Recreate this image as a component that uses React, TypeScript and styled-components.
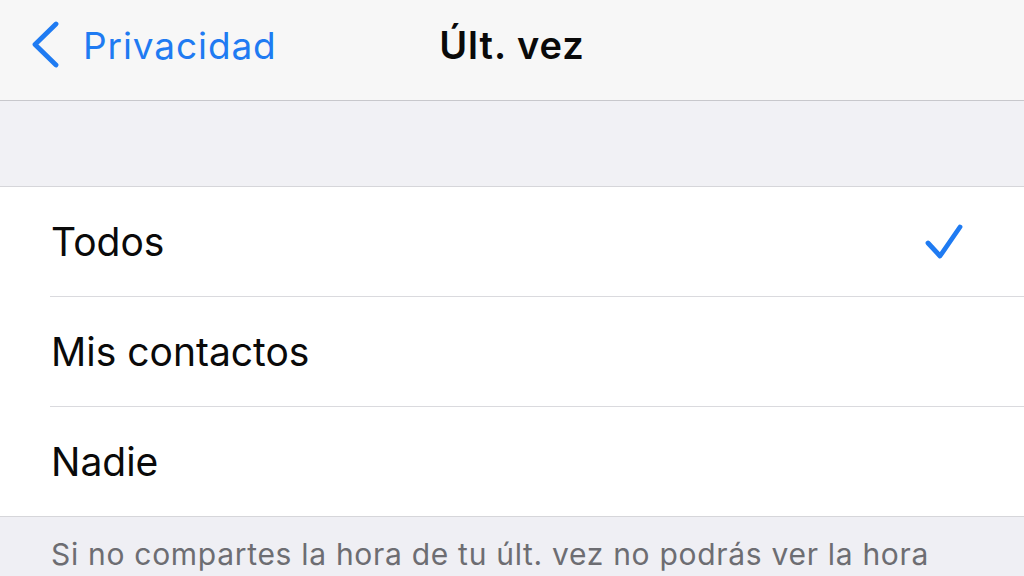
import React from 'react';
import styled, { createGlobalStyle } from 'styled-components';

const GlobalStyle = createGlobalStyle`
  html, body {
    margin: 0;
    padding: 0;
    background: #efeff4;
    font-family: Inter, "Liberation Sans", sans-serif;
    -webkit-font-smoothing: antialiased;
  }
`;

const Screen = styled.div`
  width: 1024px;
  height: 576px;
  overflow: hidden;
  background: #efeff4;
`;

const NavBar = styled.header`
  height: 101px;
  box-sizing: border-box;
  padding-bottom: 10px;
  display: grid;
  grid-template-columns: 1fr auto 1fr;
  align-items: center;
  background: #f7f7f7;
  border-bottom: 1px solid #c8c8cc;
`;

const BackButton = styled.div`
  display: flex;
  align-items: center;
  gap: 22px;
  padding-left: 31px;
  color: #1f7bf2;
  font-size: 37px;
  font-weight: 400;
  letter-spacing: 0.9px;
`;

const Title = styled.h1`
  margin: 0;
  font-size: 38px;
  font-weight: 600;
  letter-spacing: 1px;
  color: #0a0a0a;
`;

const Spacer = styled.div`
  height: 85px;
  background: #f1f1f5;
  border-bottom: 1px solid #d6d6da;
`;

const List = styled.ul`
  margin: 0;
  padding: 0 0 0 50px;
  list-style: none;
  background: #ffffff;
  border-bottom: 1px solid #d6d6da;
`;

const Row = styled.li<{ $last?: boolean }>`
  height: 109px;
  display: flex;
  align-items: center;
  justify-content: space-between;
  padding: 0 60px 0 1px;
  font-size: 39px;
  color: #0a0a0a;
  border-bottom: ${(p) => (p.$last ? 'none' : '1px solid #dadade')};
`;

const Footer = styled.p`
  margin: 0;
  padding: 19px 0 0 51px;
  font-size: 30px;
  line-height: 36px;
  letter-spacing: 0.7px;
  color: #6d6d72;
  white-space: nowrap;
`;

const Chevron = () => (
  <svg width="30" height="48" viewBox="0 0 30 48">
    <polyline points="25,3 4,23.5 25,44" fill="none" stroke="#1f7bf2" strokeWidth="4.8" strokeLinecap="round" strokeLinejoin="round" />
  </svg>
);

const Check = () => (
  <svg width="40" height="38" viewBox="0 0 40 38">
    <polyline points="4,20 16,33 36,4" fill="none" stroke="#1f7bf2" strokeWidth="4.8" strokeLinecap="round" strokeLinejoin="round" />
  </svg>
);

const options = ['Todos', 'Mis contactos', 'Nadie'];

export default function App() {
  return (
    <Screen>
      <GlobalStyle />
      <NavBar>
        <BackButton>
          <Chevron />
          <span>Privacidad</span>
        </BackButton>
        <Title>Últ. vez</Title>
        <div />
      </NavBar>
      <Spacer />
      <List>
        {options.map((o, i) => (
          <Row key={o} $last={i === options.length - 1}>
            <span>{o}</span>
            {i === 0 && <Check />}
          </Row>
        ))}
      </List>
      <Footer>Si no compartes la hora de tu últ. vez no podrás ver la hora</Footer>
    </Screen>
  );
}
